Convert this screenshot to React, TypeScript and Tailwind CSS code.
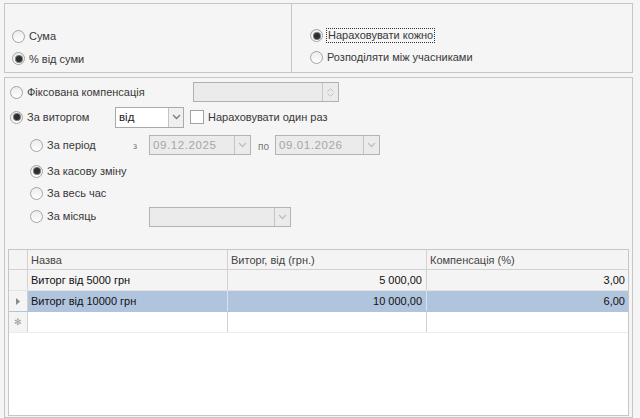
import React from 'react';

const FONT = { fontFamily: '"Liberation Sans", Arial, sans-serif' };

function Radio({ checked }: { checked?: boolean }) {
  return (
    <span className="inline-flex h-[13px] w-[13px] shrink-0 items-center justify-center rounded-full border border-[#a3a3a3] bg-gradient-to-b from-[#ececec] to-white">
      {checked && <span className="h-[6px] w-[6px] rounded-full bg-[#2e2e2e] ring-1 ring-[#777]" />}
    </span>
  );
}

function Chevron({ color = '#9a9a9a' }: { color?: string }) {
  return (
    <svg width="9" height="6" viewBox="0 0 9 6" fill="none">
      <path d="M1 1 L4.5 4.5 L8 1" stroke={color} strokeWidth="1.3" />
    </svg>
  );
}

function RadioLabel({ checked, children, className = '' }: { checked?: boolean; children: React.ReactNode; className?: string }) {
  return (
    <div className={`flex items-center gap-[4px] ${className}`}>
      <Radio checked={checked} />
      <span className="text-[#383838]">{children}</span>
    </div>
  );
}

function DisabledCombo({ value, w }: { value?: string; w: string }) {
  return (
    <div className={`flex h-[20px] ${w} border border-[#b4b4b4] bg-[#ebebeb]`}>
      <div className="flex-1 pl-[3px] text-[11.5px] leading-[18px] tracking-[0.6px] text-[#a6a6a6]">{value}</div>
      <div className="flex w-[16px] items-center justify-center border-l border-[#c4c4c4]">
        <Chevron color="#c0c0c0" />
      </div>
    </div>
  );
}

const rows = [
  { name: 'Виторг від 5000 грн', sum: '5 000,00', pct: '3,00', selected: false },
  { name: 'Виторг від 10000 грн', sum: '10 000,00', pct: '6,00', selected: true },
];

export default function App() {
  return (
    <div className="h-[418px] w-[640px] overflow-hidden bg-[#f5f5f5] pl-[4px] pr-[7px] pt-[3px] text-[11px]" style={FONT}>
      {/* Top box */}
      <div className="flex h-[70px] border border-[#c6c6c6]">
        <div className="flex w-[287px] flex-col gap-[6px] border-r border-[#c6c6c6] pl-[7px] pt-[24px]">
          <RadioLabel>Сума</RadioLabel>
          <RadioLabel checked>% від суми</RadioLabel>
        </div>
        <div className="flex flex-1 flex-col gap-[6px] pl-[18px] pt-[24px]">
          <div className="flex items-center gap-[3px]">
            <Radio checked />
            <span className="border border-dotted border-[#333] px-px leading-[13px] text-[#383838]">Нараховувати кожно</span>
          </div>
          <RadioLabel>Розподіляти між учасниками</RadioLabel>
        </div>
      </div>

      {/* Main box */}
      <div className="mt-[4px] flex h-[341px] flex-col border border-[#c6c6c6] pb-px pl-[3px] pr-[3px]">
        <div className="flex h-[27px] items-center pl-[2px] pt-px">
          <RadioLabel className="w-[183px]">Фіксована компенсація</RadioLabel>
          <div className="flex h-[20px] w-[146px] border border-[#b0b0b0] bg-[#ebebeb]">
            <div className="flex-1" />
            <div className="flex w-[16px] flex-col items-center justify-center gap-[1px] border-l border-[#c8c8c8]">
              <svg width="7" height="4" viewBox="0 0 7 4" fill="none"><path d="M0.5 3.5 L3.5 0.8 L6.5 3.5" stroke="#c0c0c0" /></svg>
              <svg width="7" height="4" viewBox="0 0 7 4" fill="none"><path d="M0.5 0.5 L3.5 3.2 L6.5 0.5" stroke="#c0c0c0" /></svg>
            </div>
          </div>
        </div>

        <div className="flex h-[24px] items-center pl-[2px]">
          <RadioLabel checked className="w-[105px]">За виторгом</RadioLabel>
          <div className="flex h-[21px] w-[69px] border border-[#a9a9a9] bg-white">
            <div className="flex-1 pl-[3px] text-[11.5px] leading-[19px] text-[#222]">від</div>
            <div className="flex w-[15px] items-center justify-center border-l border-[#c4c4c4] bg-[#f0f0f0]">
              <Chevron color="#777" />
            </div>
          </div>
          <span className="ml-[6px] h-[14px] w-[14px] border border-[#a3a3a3] bg-white" />
          <span className="ml-[4px] text-[#383838]">Нараховувати один раз</span>
        </div>

        <div className="flex h-[32px] items-center pl-[22px]">
          <RadioLabel className="w-[100px]">За період</RadioLabel>
          <span className="w-[19px] pl-[3px] pt-[4px] text-[9px] text-[#777]">з</span>
          <DisabledCombo value="09.12.2025" w="w-[102px]" />
          <span className="ml-[7px] w-[17px] pt-[3px] text-[10px] text-[#777]">по</span>
          <DisabledCombo value="09.01.2026" w="w-[105px]" />
        </div>

        <div className="flex h-[20px] items-center pl-[22px]">
          <RadioLabel checked>За касову зміну</RadioLabel>
        </div>
        <div className="flex h-[25px] items-center pl-[22px]">
          <RadioLabel>За весь час</RadioLabel>
        </div>
        <div className="flex h-[21px] items-center pl-[22px]">
          <RadioLabel className="w-[119px]">За місяць</RadioLabel>
          <DisabledCombo w="w-[142px]" />
        </div>

        {/* Grid */}
        <div className="mt-[22px] flex-1 border border-[#c6c6c6] bg-white text-[#111]">
          <div className="flex h-[20px] border-b border-[#d2d2d2] bg-[#f4f4f4] text-[#444]">
            <div className="w-[19px] border-r border-[#d2d2d2]" />
            <div className="w-[200px] border-r border-[#d2d2d2] pl-[3px] leading-[20px]">Назва</div>
            <div className="w-[199px] border-r border-[#d2d2d2] pl-[3px] leading-[20px]">Виторг, від (грн.)</div>
            <div className="flex-1 pl-[3px] leading-[20px]">Компенсація (%)</div>
          </div>
          {rows.map((r) => (
            <div key={r.name} className={`flex h-[21px] border-b ${r.selected ? 'border-[#b0c4de] bg-[#b0c4de]' : 'border-[#e4e4e4] bg-[#f4f4f4]'}`}>
              <div className="flex w-[19px] items-center justify-center border-r border-[#d2d2d2] bg-[#f4f4f4]">
                {r.selected && (
                  <svg width="4" height="7" viewBox="0 0 4 7"><path d="M0 0 L4 3.5 L0 7 Z" fill="#8a8a8a" /></svg>
                )}
              </div>
              <div className={`w-[200px] border-r pl-[3px] leading-[20px] ${r.selected ? 'border-[#d8e2ee]' : 'border-[#d2d2d2]'}`}>{r.name}</div>
              <div className={`w-[199px] border-r pr-[4px] text-right leading-[20px] ${r.selected ? 'border-[#d8e2ee]' : 'border-[#d2d2d2]'}`}>{r.sum}</div>
              <div className="flex-1 pr-[3px] text-right leading-[20px]">{r.pct}</div>
            </div>
          ))}
          <div className="flex h-[21px] border-b border-[#ececec]">
            <div className="flex w-[19px] items-center justify-center border-r border-[#d2d2d2] bg-[#f4f4f4] text-[9px] leading-none text-[#999]">✻</div>
            <div className="w-[200px] border-r border-[#d2d2d2]" />
            <div className="w-[199px] border-r border-[#d2d2d2]" />
            <div className="flex-1" />
          </div>
        </div>
      </div>
    </div>
  );
}
